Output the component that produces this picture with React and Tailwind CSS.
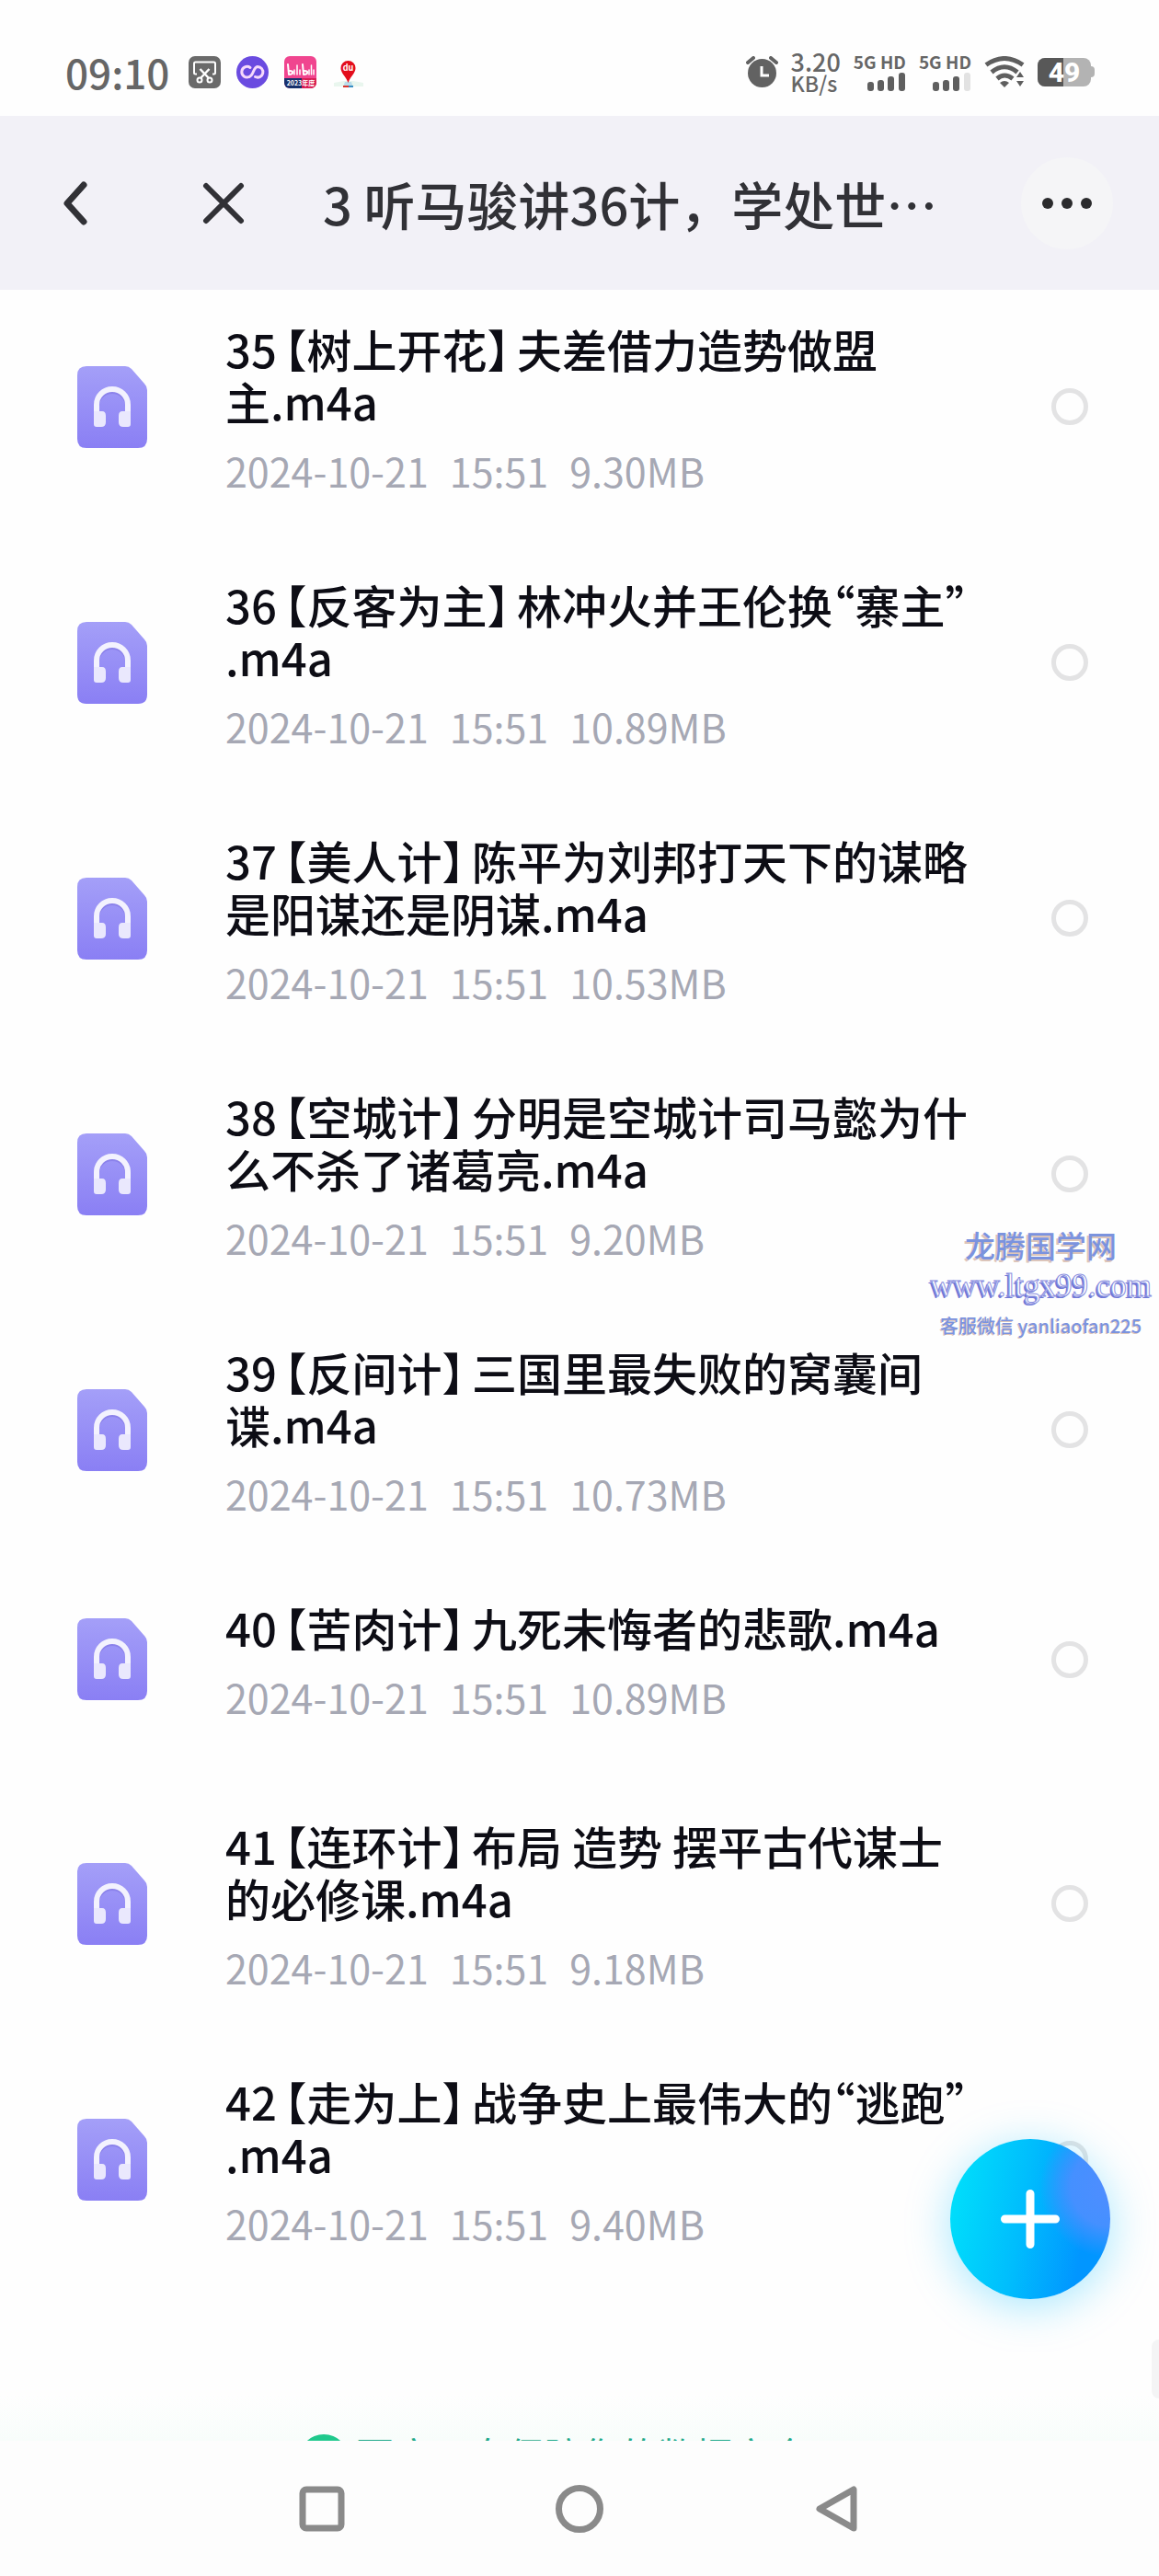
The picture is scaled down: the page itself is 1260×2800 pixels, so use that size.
import { useState } from 'react';

const files = [
  { no: '35', tag: '树上开花', title: '夫差借力造势做盟\n主.m4a', time: '15:51', size: '9.30MB' },
  { no: '36', tag: '反客为主', title: '林冲火并王伦换“寨主”\n.m4a', time: '15:51', size: '10.89MB' },
  { no: '37', tag: '美人计', title: '陈平为刘邦打天下的谋略\n是阳谋还是阴谋.m4a', time: '15:51', size: '10.53MB' },
  { no: '38', tag: '空城计', title: '分明是空城计司马懿为什\n么不杀了诸葛亮.m4a', time: '15:51', size: '9.20MB' },
  { no: '39', tag: '反间计', title: '三国里最失败的窝囊间\n谍.m4a', time: '15:51', size: '10.73MB' },
  { no: '40', tag: '苦肉计', title: '九死未悔者的悲歌.m4a', time: '15:51', size: '10.89MB', short: true },
  { no: '41', tag: '连环计', title: '布局 造势 摆平古代谋士\n的必修课.m4a', time: '15:51', size: '9.18MB' },
  { no: '42', tag: '走为上', title: '战争史上最伟大的“逃跑”\n.m4a', time: '15:51', size: '9.40MB' },
];

function ScissorsIcon() {
  return (
    <svg viewBox="0 0 35 35" className="size-[35px]">
      <rect width="35" height="35" rx="7" fill="#6a6a6a" />
      <g fill="none" stroke="#fff" strokeWidth="2">
        <path d="M9 19.500H7.500a1.500 1.500 0 0 1-1.500-1.500V8a1.500 1.500 0 0 1 1.500-1.500h20A1.500 1.500 0 0 1 29 8v10a1.500 1.500 0 0 1-1.500 1.500H26" />
        <path d="M12.500 14l9.500 10M22.500 14l-9.500 10" strokeWidth="2.500" />
        <circle cx="12" cy="26" r="2.500" />
        <circle cx="23" cy="26" r="2.500" />
      </g>
    </svg>
  );
}

function LoopIcon() {
  return (
    <svg viewBox="0 0 35 35" className="size-[35px]">
      <circle cx="17.500" cy="17.500" r="17.500" fill="#6a4be0" />
      <path
        d="M15 12.500a5.800 5.800 0 1 0-1 10c5-1.500 4-10.500 9-11a5.800 5.800 0 1 1-2.500 11"
        fill="none"
        stroke="#f6d9fb"
        strokeWidth="3"
        strokeLinecap="round"
      />
    </svg>
  );
}

function BilibiliIcon() {
  return (
    <svg viewBox="0 0 35 35" className="size-[35px]">
      <defs>
        <clipPath id="bili">
          <rect width="35" height="35" rx="6" />
        </clipPath>
      </defs>
      <g clipPath="url(#bili)">
        <rect width="35" height="35" fill="#f0458f" />
        <rect y="24" width="19" height="11" fill="#17306b" />
        <rect x="19" y="24" width="16" height="11" fill="#d81e54" />
      </g>
      <g fill="none" stroke="#fff" strokeWidth="2" strokeLinecap="round" strokeLinejoin="round">
        <path d="M4 9l1 11c5 0 6-4 1-4M20 9l1 11c5 0 6-4 1-4" />
        <path d="M11 15v5M14 10v10M17 15v5M27 15v5M29.500 10v10M32 15v5" strokeWidth="1.500" />
      </g>
      <text x="18" y="32" textAnchor="middle" fontSize="7" fontWeight="700" fill="#fff">
        2023年度
      </text>
    </svg>
  );
}

function MapPinIcon() {
  return (
    <svg viewBox="0 0 35 35" className="size-[35px]">
      <path d="M2 29l11-2h10l11 2v4H2z" fill="#e9f6ee" />
      <path d="M14 28h7l2 6H12z" fill="#b9dcea" />
      <path d="M12 32h11v2H12z" fill="#3a8fc4" />
      <path d="M12 32h6v2h-6z" fill="#d8372f" />
      <path d="M17.500 29C15 22 9.500 18.500 9.500 13a8 8 0 0 1 16 0C25.500 18.500 20 22 17.500 29z" fill="#e30d1c" />
      <text x="17.500" y="16" textAnchor="middle" fontSize="9" fontWeight="700" fill="#fff">
        du
      </text>
    </svg>
  );
}

function AlarmIcon() {
  return (
    <svg viewBox="0 0 35 35" className="size-[35px]">
      <circle cx="17.500" cy="18.500" r="15.500" fill="#626262" />
      <path d="M2 7l6-5M33 7l-6-5" stroke="#626262" strokeWidth="4" strokeLinecap="round" />
      <path d="M17 11v10h8" fill="none" stroke="#fff" strokeWidth="3" />
    </svg>
  );
}

function Signal({ weak }) {
  return (
    <div className="flex flex-col items-end">
      <span className="text-[19px] leading-5 font-bold whitespace-pre">5G HD</span>
      <svg viewBox="0 0 42 20" className="mt-[2px] h-5 w-[42px]" fill="#5f5f5f">
        <rect x="0" y="10" width="7" height="10" rx="3" />
        <rect x="11" y="8" width="7" height="12" rx="3" />
        <rect x="22" y="4" width="7" height="16" rx="3" />
        <rect x="34" y="0" width="7" height="20" rx="3" fill={weak ? '#e2e2e2' : '#5f5f5f'} />
      </svg>
    </div>
  );
}

function WifiIcon() {
  return (
    <svg viewBox="0 0 44 34" className="h-[34px] w-11">
      <g fill="none" stroke="#5f5f5f" strokeWidth="5">
        <path d="M2 9.500Q22 -4.500 42 9.500" />
        <path d="M8 17.500Q22 6 36 17.500" />
        <path d="M14 24.500Q22 17.500 31 24.500" />
      </g>
      <path d="M17 29q5-4 10 0l-5 5z" fill="#5f5f5f" />
      <path d="M39 17l4 6h-8zM39 33l4-6h-8z" fill="#5f5f5f" />
    </svg>
  );
}

function Battery({ level }) {
  return (
    <div className="flex items-center">
      <div className="relative flex h-[31px] w-[58px] items-center justify-center overflow-hidden rounded-lg bg-[#b3b3b3]">
        <div className="absolute inset-y-0 left-0 bg-[#585858]" style={{ width: `${level}%` }} />
        <span className="relative font-[Roboto] text-[30px] leading-[31px] font-extrabold text-white">{level}</span>
      </div>
      <div className="h-3 w-1 rounded-r bg-[#b3b3b3]" />
    </div>
  );
}

function StatusBar() {
  return (
    <div className="flex h-[126px] items-center justify-between pt-[30px] pr-[70px] pl-[71px] text-[#666]">
      <div className="flex items-center gap-[17px]">
        <span className="mr-1 text-[44px] leading-[48px] font-medium">09:10</span>
        <ScissorsIcon />
        <LoopIcon />
        <BilibiliIcon />
        <MapPinIcon />
      </div>
      <div className="flex items-center gap-[14px]">
        <AlarmIcon />
        <div className="flex flex-col font-medium">
          <span className="text-[27px] leading-6">3.20</span>
          <span className="text-[23px] leading-[22px]">KB/s</span>
        </div>
        <Signal />
        <Signal weak />
        <WifiIcon />
        <Battery level={49} />
      </div>
    </div>
  );
}

function Header() {
  return (
    <header className="flex h-[189px] items-center bg-[#f2f1f7] pr-[50px] pl-[58px] text-[#313136]">
      <button aria-label="返回" className="flex w-12 justify-center">
        <svg viewBox="0 0 28 48" className="h-12 w-7" fill="none" stroke="currentColor" strokeWidth="7" strokeLinecap="round" strokeLinejoin="round">
          <path d="M23 4L5 24l18 20" />
        </svg>
      </button>
      <button aria-label="关闭" className="ml-[113px] flex w-12 justify-center">
        <svg viewBox="0 0 48 48" className="size-12" fill="none" stroke="currentColor" strokeWidth="6" strokeLinecap="round">
          <path d="M5 5l38 38M43 5L5 43" />
        </svg>
      </button>
      <h1 className="ml-[84px] flex-1 text-[56px] leading-[60px] font-medium whitespace-nowrap">3 听马骏讲36计，学处世…</h1>
      <button aria-label="更多" className="flex size-[100px] items-center justify-center rounded-full bg-[#f5f5f7] text-[#2b2b2d]">
        <svg viewBox="0 0 56 14" className="h-[14px] w-14" fill="currentColor">
          <circle cx="7" cy="7" r="6" />
          <circle cx="28" cy="7" r="6" />
          <circle cx="49" cy="7" r="6" />
        </svg>
      </button>
    </header>
  );
}

function AudioFileIcon() {
  return (
    <svg viewBox="0 0 76 89" className="h-[89px] w-[76px] shrink-0">
      <defs>
        <linearGradient id="file" x1="0" y1="0" x2="0" y2="1">
          <stop offset="0" stopColor="#a49ff8" />
          <stop offset="1" stopColor="#8a7ff4" />
        </linearGradient>
      </defs>
      <path d="M10 0h42q4 0 7 3l14 16q3 3 3 7v53q0 10-10 10H10Q0 89 0 79V10Q0 0 10 0z" fill="url(#file)" />
      <path d="M21 54V42a17 17 0 0 1 34 0v12" transform="translate(0 2)" fill="none" stroke="#7b70df" strokeWidth="6" opacity=".5" />
      <path d="M21 56V42a17 17 0 0 1 34 0v14" fill="none" stroke="#f3f2fe" strokeWidth="6" />
      <path d="M18 49h9q4 0 4 5v7q0 5-5 5h-5q-3 0-3-3zM58 49h-9q-4 0-4 5v7q0 5 5 5h5q3 0 3-3z" fill="#eae8fd" />
    </svg>
  );
}

function FileRow({ file, checked, onToggle }) {
  const id = `file-${file.no}`;

  return (
    <li className={`flex items-center pr-[77px] pl-[84px] ${file.short ? 'mb-4' : ''}`}>
      <AudioFileIcon />
      <label htmlFor={id} className="ml-[85px] flex-1 pt-[47px] pb-10">
        <span className="block text-[49px] leading-[57px] font-medium whitespace-pre-line text-[#0d0d15]">
          {file.no}
          <span className="mx-2 [font-feature-settings:'halt']">【{file.tag}】</span>
          <span className="[font-feature-settings:'halt']">{file.title}</span>
        </span>
        <span className="mt-[18px] flex gap-[23px] text-[43px] leading-[59px] text-[#a6a8b4]">
          <span>2024-10-21</span>
          <span>{file.time}</span>
          <span>{file.size}</span>
        </span>
      </label>
      <input
        id={id}
        type="checkbox"
        checked={checked}
        onChange={() => onToggle(file.no)}
        className="size-10 shrink-0 appearance-none rounded-full border-[5px] border-[#e3e3e4] checked:border-[#00a0ff]"
      />
    </li>
  );
}

function Watermark() {
  return (
    <div className="pointer-events-none absolute top-[1331px] right-2 flex flex-col items-center text-[#7b93de]">
      <span className="text-[33px] leading-[44px] font-medium [text-shadow:-2px_2px_0_#dcc5ba]">龙腾国学网</span>
      <span className="font-['Liberation_Serif'] text-[35px] leading-[46px] text-white [-webkit-text-stroke:1px_#8a8fe0] [text-shadow:-2px_2px_0_#6f78d6]">
        www.ltgx99.com
      </span>
      <span className="text-[20px] leading-10 font-medium [text-shadow:-1px_1px_0_#dcc5ba]">客服微信 yanliaofan225</span>
    </div>
  );
}

function AddButton() {
  return (
    <button
      aria-label="添加"
      className="absolute top-[2325px] right-[53px] flex size-[174px] items-center justify-center rounded-full bg-[radial-gradient(circle_at_100%_30%,#4f8dff_0%,#4590ff_20%,transparent_36%),linear-gradient(100deg,#00dffb_5%,#00bdfd_45%,#0196ff_80%)] shadow-[0_8px_48px_rgba(0,190,255,0.35)]"
    >
      <svg viewBox="0 0 64 64" className="size-16" stroke="#fff" strokeWidth="9" strokeLinecap="round">
        <path d="M32 4.500v55M4.500 32h55" />
      </svg>
    </button>
  );
}

function NavBar() {
  return (
    <nav className="flex h-[147px] items-center justify-center gap-[226px] bg-[#fdfdfd] text-[#8a8a8a]">
      <button aria-label="最近任务">
        <svg viewBox="0 0 54 54" className="size-[54px]" fill="none" stroke="currentColor" strokeWidth="7">
          <rect x="6" y="6" width="42" height="42" rx="4" />
        </svg>
      </button>
      <button aria-label="主页">
        <svg viewBox="0 0 54 54" className="size-[54px]" fill="none" stroke="currentColor" strokeWidth="7">
          <circle cx="27" cy="27" r="22.500" />
        </svg>
      </button>
      <button aria-label="返回上一页">
        <svg viewBox="0 0 54 54" className="size-[54px]" fill="none" stroke="currentColor" strokeWidth="7" strokeLinejoin="round">
          <path d="M45 6v42L8 27z" />
        </svg>
      </button>
    </nav>
  );
}

export default function App() {
  const [selected, setSelected] = useState([]);

  const toggle = (no) => {
    setSelected(selected.includes(no) ? selected.filter((n) => n !== no) : [...selected, no]);
  };

  return (
    <div
      lang="zh-CN"
      className="relative flex min-h-screen flex-col overflow-hidden bg-[#fefefe] font-['Noto_Sans_CJK_SC',sans-serif]"
    >
      <StatusBar />
      <Header />
      <main className="flex-1">
        <ul className="-mt-3">
          {files.map((file) => (
            <FileRow key={file.no} file={file} checked={selected.includes(file.no)} onToggle={toggle} />
          ))}
        </ul>
        {/* security notice, mostly tucked under the nav bar */}
        <div className="flex h-[167px] items-start justify-center gap-2 overflow-hidden bg-linear-to-b from-transparent from-70% to-[#f8fdfb] pt-[160px] pr-14 text-[#1fa98a]">
          <svg viewBox="0 0 54 54" className="size-[54px] shrink-0">
            <circle cx="27" cy="27" r="27" fill="#1fc98c" />
            <path d="M16 27l8 8 15-16" fill="none" stroke="#fff" strokeWidth="5" />
          </svg>
          <span className="text-[41px] leading-[42px]">百度网盘保障您的数据安全</span>
        </div>
      </main>
      <NavBar />
      <Watermark />
      <AddButton />
      <div className="absolute top-[2543px] right-0 h-16 w-2 rounded-l-lg bg-[#f4f4f5]" />
    </div>
  );
}
